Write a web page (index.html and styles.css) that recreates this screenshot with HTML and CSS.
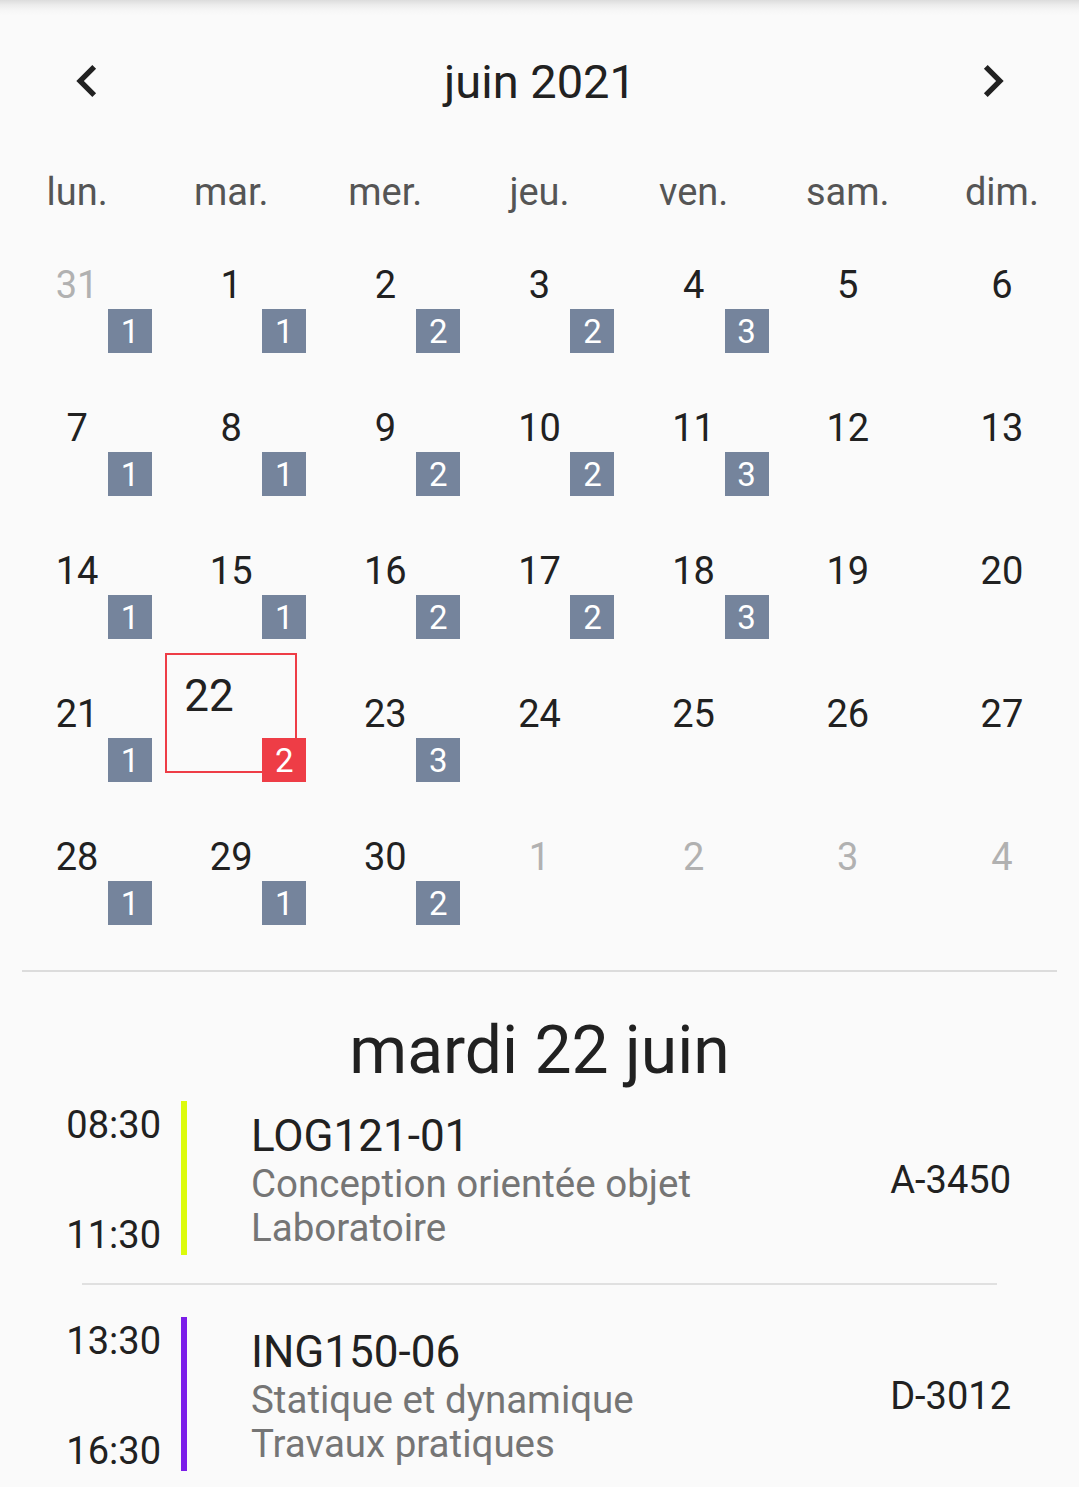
FILE: index.html
```html
<!DOCTYPE html>
<html lang="fr">
<head>
<meta charset="utf-8">
<title>Horaire</title>
<link rel="stylesheet" href="styles.css">
</head>
<body>
<div class="page">
  <header class="cal-header">
    <button class="nav-btn" aria-label="Mois précédent">
      <svg viewBox="0 0 24 24" width="64" height="64"><path d="M15.41 7.41L14 6l-6 6 6 6 1.41-1.41L10.83 12z" fill="#212121"/></svg>
    </button>
    <div class="month-title">juin 2021</div>
    <button class="nav-btn" aria-label="Mois suivant">
      <svg viewBox="0 0 24 24" width="64" height="64"><path d="M10 6L8.59 7.41 13.17 12l-4.58 4.59L10 18l6-6z" fill="#212121"/></svg>
    </button>
  </header>

  <div class="weekdays">
    <div>lun.</div><div>mar.</div><div>mer.</div><div>jeu.</div><div>ven.</div><div>sam.</div><div>dim.</div>
  </div>

  <div class="month-grid">
    <div class="cell"><div class="num muted">31</div><span class="badge">1</span></div>
    <div class="cell"><div class="num">1</div><span class="badge">1</span></div>
    <div class="cell"><div class="num">2</div><span class="badge">2</span></div>
    <div class="cell"><div class="num">3</div><span class="badge">2</span></div>
    <div class="cell"><div class="num">4</div><span class="badge">3</span></div>
    <div class="cell"><div class="num">5</div></div>
    <div class="cell"><div class="num">6</div></div>

    <div class="cell"><div class="num">7</div><span class="badge">1</span></div>
    <div class="cell"><div class="num">8</div><span class="badge">1</span></div>
    <div class="cell"><div class="num">9</div><span class="badge">2</span></div>
    <div class="cell"><div class="num">10</div><span class="badge">2</span></div>
    <div class="cell"><div class="num">11</div><span class="badge">3</span></div>
    <div class="cell"><div class="num">12</div></div>
    <div class="cell"><div class="num">13</div></div>

    <div class="cell"><div class="num">14</div><span class="badge">1</span></div>
    <div class="cell"><div class="num">15</div><span class="badge">1</span></div>
    <div class="cell"><div class="num">16</div><span class="badge">2</span></div>
    <div class="cell"><div class="num">17</div><span class="badge">2</span></div>
    <div class="cell"><div class="num">18</div><span class="badge">3</span></div>
    <div class="cell"><div class="num">19</div></div>
    <div class="cell"><div class="num">20</div></div>

    <div class="cell"><div class="num">21</div><span class="badge">1</span></div>
    <div class="cell"><div class="selected"><span class="sel-num">22</span></div><span class="badge badge-red">2</span></div>
    <div class="cell"><div class="num">23</div><span class="badge">3</span></div>
    <div class="cell"><div class="num">24</div></div>
    <div class="cell"><div class="num">25</div></div>
    <div class="cell"><div class="num">26</div></div>
    <div class="cell"><div class="num">27</div></div>

    <div class="cell"><div class="num">28</div><span class="badge">1</span></div>
    <div class="cell"><div class="num">29</div><span class="badge">1</span></div>
    <div class="cell"><div class="num">30</div><span class="badge">2</span></div>
    <div class="cell"><div class="num muted">1</div></div>
    <div class="cell"><div class="num muted">2</div></div>
    <div class="cell"><div class="num muted">3</div></div>
    <div class="cell"><div class="num muted">4</div></div>
  </div>

  <hr class="divider">

  <h1 class="day-title">mardi 22 juin</h1>

  <div class="event">
    <div class="times"><span>08:30</span><span>11:30</span></div>
    <div class="bar bar-lime"></div>
    <div class="info">
      <div class="course">LOG121-01</div>
      <div class="sub">Conception orientée objet</div>
      <div class="sub">Laboratoire</div>
    </div>
    <div class="room">A-3450</div>
  </div>

  <hr class="event-divider">

  <div class="event">
    <div class="times"><span>13:30</span><span>16:30</span></div>
    <div class="bar bar-purple"></div>
    <div class="info">
      <div class="course">ING150-06</div>
      <div class="sub">Statique et dynamique</div>
      <div class="sub">Travaux pratiques</div>
    </div>
    <div class="room">D-3012</div>
  </div>
</div>
</body>
</html>
```

FILE: styles.css
```css
html, body {
  margin: 0;
  padding: 0;
  background: #fafafa;
}

body {
  font-family: Roboto, "Noto Sans", "Liberation Sans", sans-serif;
  color: #212121;
}

.page {
  width: 1079px;
  height: 1487px;
  overflow: hidden;
  background: linear-gradient(to bottom, #dcdcdc 0, #ececec 5px, #f7f7f7 11px, #fafafa 16px) no-repeat top / 100% 16px, #fafafa;
}

.cal-header {
  display: flex;
  align-items: center;
  justify-content: space-between;
  height: 64px;
  padding: 50px 54px 0 55px;
}

.nav-btn {
  width: 64px;
  height: 64px;
  padding: 0;
  border: 0;
  background: none;
  display: flex;
  margin-top: -2px;
}

.month-title {
  font-size: 47px;
  line-height: 64px;
}

.weekdays {
  display: grid;
  grid-template-columns: repeat(7, 1fr);
  margin-top: 54px;
  font-size: 38px;
  line-height: 48px;
  color: #555555;
  text-align: center;
}

.month-grid {
  display: grid;
  grid-template-columns: repeat(7, 1fr);
  grid-auto-rows: 143px;
  margin-top: 32px;
}

.cell {
  position: relative;
}

.num {
  padding-top: 13px;
  font-size: 38px;
  line-height: 48px;
  text-align: center;
  color: #212121;
}

.num.muted {
  color: #b1b1b1;
}

.badge {
  position: absolute;
  top: 61px;
  left: calc(50% + 31px);
  width: 44px;
  height: 44px;
  background: #75849c;
  color: #ffffff;
  font-size: 33px;
  line-height: 45px;
  text-align: center;
}

.badge-red {
  background: #ee3d46;
}

.selected {
  position: absolute;
  top: -24px;
  left: calc(50% - 66px);
  width: 132px;
  height: 120px;
  box-sizing: border-box;
  border: 2px solid #ee3d46;
  padding: 15px 0 0 17px;
}

.sel-num {
  display: block;
  font-size: 44px;
  line-height: 52px;
}

.divider {
  margin: 7px 22px 0;
  border: 0;
  height: 2px;
  background: #dcdcdc;
}

.day-title {
  margin: 41px 0 0;
  font-size: 66px;
  font-weight: 400;
  line-height: 76px;
  text-align: center;
}

.event {
  display: flex;
  align-items: stretch;
  height: 154px;
  margin-top: 12px;
  padding: 0 68px 0 58px;
}

.event-divider + .event {
  margin-top: 32px;
}

.times {
  display: flex;
  flex-direction: column;
  justify-content: space-between;
  box-sizing: border-box;
  width: 103px;
  padding: 2px 0 0;
  text-align: right;
  font-size: 38px;
  line-height: 44px;
}

.times span:last-child {
  margin-bottom: -2px;
}

.bar {
  width: 6px;
  margin-left: 20px;
}

.bar-lime {
  background: #dcfb0c;
}

.bar-purple {
  background: #7b1de9;
}

.info {
  flex: 1;
  margin-left: 64px;
  padding-top: 9px;
}

.course {
  font-size: 44px;
  line-height: 52px;
}

.sub {
  font-size: 38.5px;
  line-height: 44px;
  color: #757575;
}

.room {
  align-self: center;
  padding-top: 4px;
  font-size: 38px;
  line-height: 44px;
}

.event-divider {
  margin: 28px 82px 0;
  border: 0;
  height: 2px;
  background: #e0e0e0;
}
```
